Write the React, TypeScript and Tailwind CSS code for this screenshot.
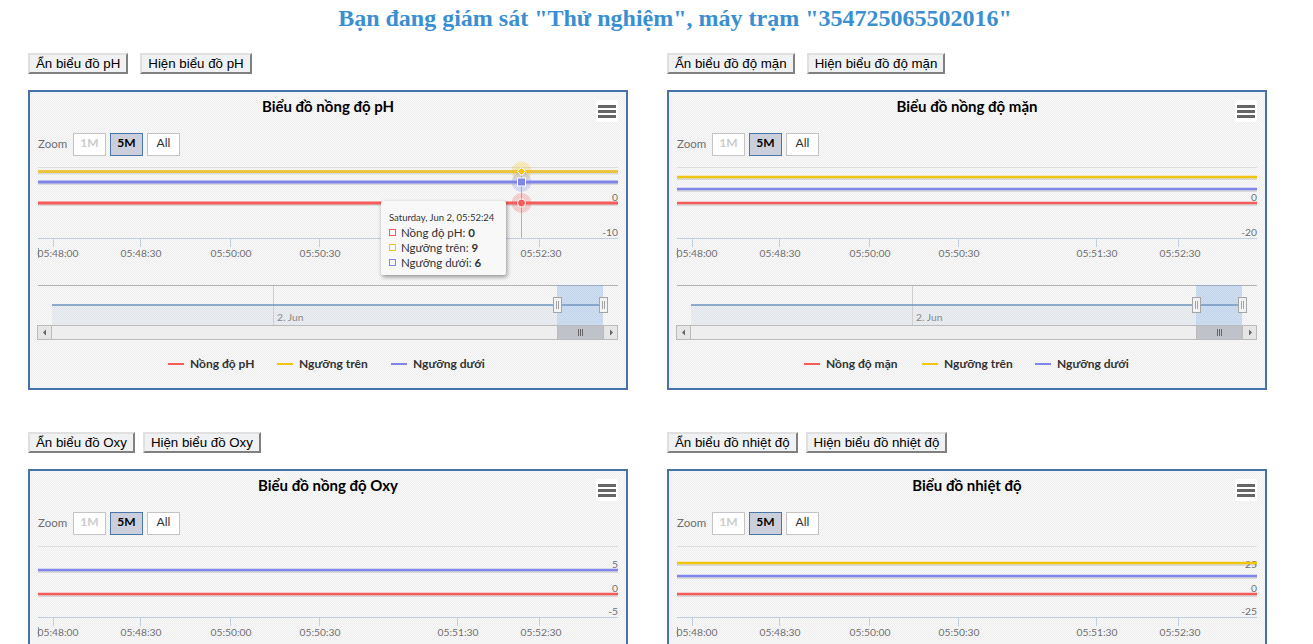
import React from "react";

const RED = "#f45b5b";
const GOLD = "#f3c513";
const PURPLE = "#8085e9";
const TEX =
  "bg-[#f3f3f3] bg-[conic-gradient(#f9f9f9_25%,#eeeeee_0_50%,#f9f9f9_0_75%,#eeeeee_0)] bg-[length:2px_2px]";

type ChartCfg = {
  hide: string;
  show: string;
  gap: string;
  title: string;
  series: { color: string; y: number; name: string }[];
  yLabels: { t: string; y: number }[];
  hover?: boolean;
  legend: { color: string; name: string; x: number }[];
};

const ticks = [
  { x: 53, lx: 58, t: "05:48:00" },
  { x: 140, lx: 141, t: "05:48:30" },
  { x: 230, lx: 231, t: "05:50:00" },
  { x: 319, lx: 320, t: "05:50:30" },
  { x: 457, lx: 458, t: "05:51:30" },
  { x: 539, lx: 541, t: "05:52:30" },
];

function Plot({ c }: { c: ChartCfg }) {
  return (
    <svg width="596" height="194" className="block shrink-0" style={{ fontFamily: "Lato, sans-serif" }}>
      <g transform="translate(-30,-156)">
        <line x1="38" x2="618" y1="167.5" y2="167.5" stroke="#dcdcdc" />
        <line x1="38" x2="618" y1="238.5" y2="238.5" stroke="#c0d0e0" />
        <line x1="38.5" x2="38.5" y1="248" y2="258" stroke="#8a9aaa" />
        {ticks.map((t) => (
          <g key={t.t}>
            <line x1={t.x + 0.5} x2={t.x + 0.5} y1="238" y2="247" stroke="#c0d0e0" />
            <text x={t.lx} y="257" textAnchor="middle" fontSize="10.3" fill="#6e6e70">
              {t.t}
            </text>
          </g>
        ))}
        {c.yLabels.map((l) => (
          <text key={l.t} x="618" y={l.y} textAnchor="end" fontSize="10.3" fill="#6e6e70">
            {l.t}
          </text>
        ))}
        {c.hover && <line x1="521.5" x2="521.5" y1="171" y2="238" stroke="#b5b5b5" />}
        {c.series.map((s) => (
          <g key={s.name}>
            <line x1="38" x2="618" y1={s.y + 2} y2={s.y + 2} stroke="#000" strokeOpacity="0.1" strokeWidth="2" />
            <line
              x1="38"
              x2="618"
              y1={s.y}
              y2={s.y}
              stroke={c.hover && s.color === GOLD ? "#ebc53e" : s.color}
              strokeWidth={c.hover ? 3 : 2.5}
            />
          </g>
        ))}
        {c.hover && (
          <g>
            <circle cx="521.5" cy="171.5" r="10" fill={GOLD} fillOpacity="0.25" />
            <circle cx="521.5" cy="182" r="10" fill={PURPLE} fillOpacity="0.25" />
            <circle cx="521.5" cy="203" r="10" fill={RED} fillOpacity="0.25" />
            <path d="M521.5 167.5l4 4-4 4-4-4z" fill={GOLD} stroke="#fff" />
            <rect x="517.5" y="178" width="8" height="8" fill={PURPLE} stroke="#fff" />
            <circle cx="521.5" cy="203" r="4" fill={RED} stroke="#fff" />
          </g>
        )}
        {/* navigator */}
        <rect x="52" y="305" width="505" height="20" fill="#7798bf" fillOpacity="0.1" />
        <line x1="273.5" x2="273.5" y1="285" y2="325" stroke="#cfcfcf" />
        <text x="277" y="321" fontSize="10.3" fill="#8a8a8a">
          2. Jun
        </text>
        <line x1="38" x2="618" y1="285.5" y2="285.5" stroke="#b2b1b6" />
        <rect x="557" y="285" width="46" height="40" fill="#6aa0e0" fillOpacity="0.3" />
        <line x1="52" x2="603" y1="305" y2="305" stroke="#7798bf" strokeOpacity="0.8" strokeWidth="2" />
        {[557.5, 603].map((x) => (
          <g key={x}>
            <rect x={Math.floor(x) - 3.5} y="297.5" width="8" height="15" fill="#f2f2f2" stroke="#a5a5a5" />
            <line x1={Math.floor(x) - 0.5} x2={Math.floor(x) - 0.5} y1="301" y2="309" stroke="#a5a5a5" />
            <line x1={Math.floor(x) + 1.5} x2={Math.floor(x) + 1.5} y1="301" y2="309" stroke="#a5a5a5" />
          </g>
        ))}
        {/* scrollbar */}
        <rect x="37.5" y="325.5" width="580" height="14" fill="#eeeeee" stroke="#bbbbbb" />
        <rect x="37.5" y="325.5" width="14" height="14" fill="#e6e6e6" stroke="#bbbbbb" />
        <rect x="603.5" y="325.5" width="14" height="14" fill="#e6e6e6" stroke="#bbbbbb" />
        <rect x="557.5" y="325.5" width="46" height="14" fill="#bfc3c9" stroke="#bbbbbb" />
        <path d="M46 329.5v6l-3-3z" fill="#666" />
        <path d="M610 329.5v6l3-3z" fill="#666" />
        {[578, 580, 582].map((x) => (
          <line key={x} x1={x + 0.5} x2={x + 0.5} y1="329" y2="336" stroke="#666" />
        ))}
      </g>
    </svg>
  );
}

function Tooltip() {
  return (
    <div className="absolute left-[351px] top-[109px] w-[125px] h-[74px] bg-[#f8f8f8] shadow-[1px_2px_4px_rgba(0,0,0,0.4)] rounded-[2px] pl-2 pt-[9px] text-[#333] font-['Lato',sans-serif] leading-[15px]">
      <div className="text-[9.5px] leading-[15px]">Saturday, Jun 2, 05:52:24</div>
      {[
        { n: "Nồng độ pH: ", v: "0", color: RED },
        { n: "Ngưỡng trên: ", v: "9", color: GOLD },
        { n: "Ngưỡng dưới: ", v: "6", color: PURPLE },
      ].map((r) => (
        <div key={r.n} className="flex items-center whitespace-pre">
          <span className="w-[7px] h-[7px] border mr-[5px]" style={{ borderColor: r.color }} />
          <span className="text-[11.5px]">
            {r.n}
            <b>{r.v}</b>
          </span>
        </div>
      ))}
    </div>
  );
}

function Chart({ c }: { c: ChartCfg }) {
  return (
    <div className="flex flex-col">
      <div className={`flex h-[21px] font-['Liberation_Sans',sans-serif] ${c.gap}`}>
        {[c.hide, c.show].map((t) => (
          <button
            key={t}
            className="h-[21px] px-[6px] bg-[#eff1f2] text-black text-[13.3px] leading-[15px] border-2 border-t-[#e0e0e0] border-l-[#e0e0e0] border-r-[#808080] border-b-[#808080] whitespace-nowrap"
          >
            {t}
          </button>
        ))}
      </div>
      <div className={`relative mt-[16px] w-[600px] h-[300px] shrink-0 border-2 border-[#4572a7] flex flex-col ${TEX}`}>
        <div className="h-[28px] mb-[2px] flex items-center justify-center font-['Lato',sans-serif] font-bold text-[15px] text-black">
          {c.title}
        </div>
        <div className="mt-[11px] h-[23px] pl-2 flex items-center font-['Lato',sans-serif] text-[12px]">
          <span className="w-[35px] text-[#6e6e70] text-[11.5px] -translate-y-px">Zoom</span>
          <div className="flex gap-[4px]">
            <span className="w-[33px] h-[23px] bg-white border border-[#c4c4c4] text-center text-[#cccccc] font-bold leading-[17px]">1M</span>
            <span className="w-[33px] h-[23px] bg-[#cbcfdb] border border-[#4a76a8] text-center text-black font-bold leading-[17px]">5M</span>
            <span className="w-[33px] h-[23px] bg-white border border-[#c4c4c4] text-center text-[#333] leading-[17px]">All</span>
          </div>
        </div>
        <Plot c={c} />
        <div className="h-[28px] relative font-['Lato',sans-serif] font-bold text-[12px] text-[#333]">
          {c.legend.map((s) => (
            <span key={s.name} className="absolute top-0 h-[28px] flex items-center gap-[6px] whitespace-nowrap" style={{ left: s.x }}>
              <span className="w-[16px] h-[2px]" style={{ background: s.color }} />
              {s.name}
            </span>
          ))}
        </div>
        <div className="absolute right-[8px] top-[8px] w-[22px] h-[22px] bg-white rounded-[2px] flex flex-col items-center justify-center gap-[2px]">
          <span className="w-[18px] h-[3px] bg-[#666]" />
          <span className="w-[18px] h-[3px] bg-[#666]" />
          <span className="w-[18px] h-[3px] bg-[#666]" />
        </div>
        {c.hover && <Tooltip />}
      </div>
    </div>
  );
}

const charts: ChartCfg[] = [
  {
    hide: "Ẩn biểu đồ pH",
    show: "Hiện biểu đồ pH",
    gap: "gap-3",
    title: "Biểu đồ nồng độ pH",
    hover: true,
    series: [
      { color: GOLD, y: 171.5, name: "Ngưỡng trên" },
      { color: PURPLE, y: 182, name: "Ngưỡng dưới" },
      { color: RED, y: 203, name: "Nồng độ pH" },
    ],
    yLabels: [
      { t: "0", y: 201 },
      { t: "-10", y: 236 },
    ],
    legend: [
      { color: RED, name: "Nồng độ pH", x: 138 },
      { color: GOLD, name: "Ngưỡng trên", x: 247 },
      { color: PURPLE, name: "Ngưỡng dưới", x: 361 },
    ],
  },
  {
    hide: "Ẩn biểu đồ độ mặn",
    show: "Hiện biểu đồ độ mặn",
    gap: "gap-3",
    title: "Biểu đồ nồng độ mặn",
    series: [
      { color: GOLD, y: 177, name: "Ngưỡng trên" },
      { color: PURPLE, y: 189, name: "Ngưỡng dưới" },
      { color: RED, y: 203, name: "Nồng độ mặn" },
    ],
    yLabels: [
      { t: "0", y: 201 },
      { t: "-20", y: 236 },
    ],
    legend: [
      { color: RED, name: "Nồng độ mặn", x: 135 },
      { color: GOLD, name: "Ngưỡng trên", x: 253 },
      { color: PURPLE, name: "Ngưỡng dưới", x: 366 },
    ],
  },
  {
    hide: "Ẩn biểu đồ Oxy",
    show: "Hiện biểu đồ Oxy",
    gap: "gap-2",
    title: "Biểu đồ nồng độ Oxy",
    series: [
      { color: PURPLE, y: 191, name: "Ngưỡng dưới" },
      { color: RED, y: 215, name: "Nồng độ Oxy" },
    ],
    yLabels: [
      { t: "5", y: 189 },
      { t: "0", y: 213 },
      { t: "-5", y: 236 },
    ],
    legend: [
      { color: RED, name: "Nồng độ Oxy", x: 135 },
      { color: PURPLE, name: "Ngưỡng dưới", x: 361 },
    ],
  },
  {
    hide: "Ẩn biểu đồ nhiệt độ",
    show: "Hiện biểu đồ nhiệt độ",
    gap: "gap-2",
    title: "Biểu đồ nhiệt độ",
    series: [
      { color: GOLD, y: 184, name: "Ngưỡng trên" },
      { color: PURPLE, y: 197, name: "Ngưỡng dưới" },
      { color: RED, y: 215, name: "Nhiệt độ" },
    ],
    yLabels: [
      { t: "25", y: 189 },
      { t: "0", y: 213 },
      { t: "-25", y: 236 },
    ],
    legend: [
      { color: RED, name: "Nhiệt độ", x: 135 },
      { color: GOLD, name: "Ngưỡng trên", x: 253 },
      { color: PURPLE, name: "Ngưỡng dưới", x: 366 },
    ],
  },
];

export default function App() {
  return (
    <div className="h-[644px] overflow-hidden bg-white">
      <h1 className="h-[53px] pt-[4px] pl-[37px] text-center font-['Liberation_Serif',serif] font-bold text-[24px] leading-[28px] text-[#3a8fd2]">
        Bạn đang giám sát "Thử nghiệm", máy trạm "354725065502016"
      </h1>
      <div className="grid grid-cols-[600px_600px] gap-x-[39px] gap-y-[42px] pl-[28px]">
        {charts.map((c) => (
          <Chart key={c.title} c={c} />
        ))}
      </div>
    </div>
  );
}
